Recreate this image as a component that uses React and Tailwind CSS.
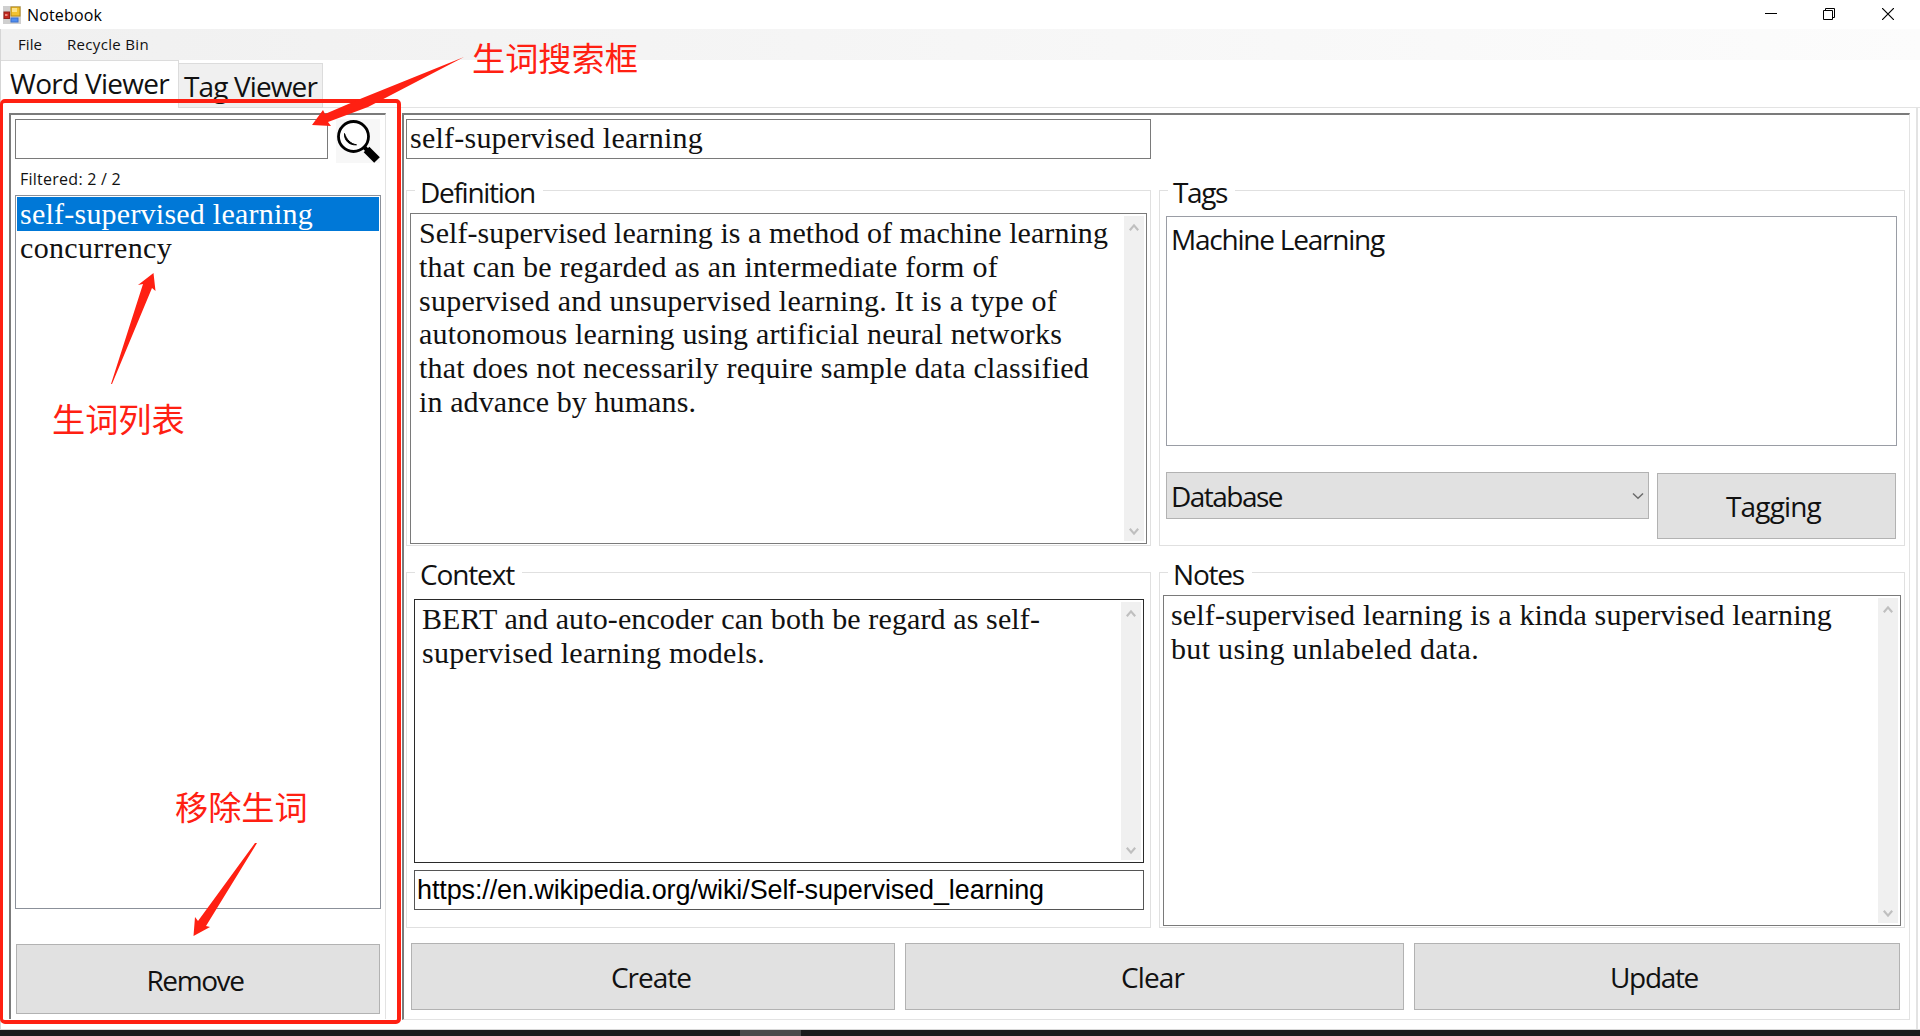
import { useLayoutEffect, useRef, useState } from "react";

// Text run that tracks its letters so the line spans exactly `w` pixels.
function Fit({ w, className = "", children }) {
  const ref = useRef(null);
  const [spacing, setSpacing] = useState(0);
  useLayoutEffect(() => {
    const natural = ref.current.getBoundingClientRect().width;
    setSpacing((w - natural) / children.length);
  }, []);
  return (
    <span className={"block w-max whitespace-pre " + className}>
      <span ref={ref} style={{ letterSpacing: spacing }}>{children}</span>
    </span>
  );
}

const SERIF = "font-['Liberation_Serif',serif] text-[30px] leading-[34px]";

function Lines({ items, className = "" }) {
  return (
    <div className={"flex-1 font-['Liberation_Serif',serif] text-[30px] leading-[33.75px] " + className}>
      {items.map(([text, w]) => (
        <Fit key={text} w={w}>{text}</Fit>
      ))}
    </div>
  );
}

function Scrollbar() {
  return (
    <div className="flex w-5 flex-col items-center justify-between bg-[#f0f0f0] pt-[7px] pb-[5px] text-[#bfbfbf]">
      <svg width="10" height="9" viewBox="0 0 10 9" fill="none" stroke="currentColor" strokeWidth="2.2">
        <path d="M0.8 7.2 5 2.4 9.2 7.2" />
      </svg>
      <svg width="10" height="9" viewBox="0 0 10 9" fill="none" stroke="currentColor" strokeWidth="2.2">
        <path d="M0.8 1.8 5 6.6 9.2 1.8" />
      </svg>
    </div>
  );
}

function Group({ title, titleWidth, className = "", children }) {
  return (
    <section className={"flex flex-col border border-[#e0e0e0] " + className}>
      <div className="-mt-[16px] ml-2 h-[33px] w-fit bg-white pr-2 pl-[5px] text-[28px] leading-[34px]">
        <Fit w={titleWidth}>{title}</Fit>
      </div>
      {children}
    </section>
  );
}

function Button({ w, className = "", children }) {
  return (
    <button className={"flex items-center justify-center border border-[#b2b2b2] bg-[#e1e1e1] text-[28px] leading-[34px] " + className}>
      <Fit w={w}>{children}</Fit>
    </button>
  );
}

function TitleBar() {
  return (
    <header className="flex h-[29px] items-center bg-white pl-[3px]">
      <svg width="18" height="18" viewBox="0 0 18 18">
        <rect width="18" height="18" fill="#cfcfcf" />
        <rect x="8" y="1" width="9" height="9" fill="#f2c230" stroke="#b88a12" />
        <rect x="9" y="2" width="5" height="4" fill="#fbe28a" />
        <rect x="1" y="6" width="5.5" height="6.5" fill="#c2281f" stroke="#94201a" />
        <rect x="2" y="8" width="2.5" height="2" fill="#ee8a80" />
        <rect x="8" y="12" width="7" height="4" fill="#4f8df0" stroke="#3a70cf" />
      </svg>
      <Fit w={75} className="ml-[6px] text-[16px] leading-5 text-black">Notebook</Fit>
      <div className="ml-auto flex items-center pb-px text-black">
        <svg width="12" height="12" viewBox="0 0 12 12" className="mr-[46px]"><path d="M0 5.5h12" stroke="currentColor" /></svg>
        <svg width="12" height="12" viewBox="0 0 12 12" className="mr-[47px]" fill="none" stroke="currentColor">
          <path d="M.5 2.5h9v9h-9zM2.5 2.5v-2h9v9h-2" />
        </svg>
        <svg width="12" height="12" viewBox="0 0 12 12" className="mr-[26px]" stroke="currentColor" strokeWidth="1.2">
          <path d="M0 0 12 12M12 0 0 12" />
        </svg>
      </div>
    </header>
  );
}

function WordList() {
  return (
    <aside className="flex h-[906px] w-[377px] flex-col border-t-2 border-r border-l-2 border-t-[#7b7b7b] border-r-[#e3e3e3] border-l-[#7b7b7b] pl-1">
      <div className="mt-1 flex">
        <div className="h-10 w-[313px] border border-[#7a7a7a]" />
        <svg width="44" height="44" viewBox="0 0 44 44" className="ml-2">
          <rect width="44" height="44" fill="#f7f7f7" />
          <circle cx="17.5" cy="17.5" r="15" fill="#fff" stroke="#000" strokeWidth="2.8" />
          <path d="M8.5 14.5C8 21 13 26.500 20.500 25.800C14.500 24.800 10.500 20.500 8.500 14.500z" fill="#000" stroke="#000" />
          <path d="M28 28 31 31" stroke="#000" strokeWidth="4" />
          <path d="M30.500 30.500 41 41" stroke="#000" strokeWidth="8" />
        </svg>
      </div>
      <Fit w={101} className="mt-1 ml-[5px] text-[16px] leading-6">Filtered: 2 / 2</Fit>
      <div className="mt-1 h-[714px] w-[366px] border border-[#8b9099] p-px">
        <div className={"h-[34px] bg-[#0078d7] pl-[3px] text-white " + SERIF}>
          <Fit w={293}>self-supervised learning</Fit>
        </div>
        <div className={"pl-[3px] " + SERIF}>
          <Fit w={152}>concurrency</Fit>
        </div>
      </div>
      <Button w={97} className="mt-[35px] ml-px h-[70px] w-[364px] pt-px pr-[6px]">Remove</Button>
    </aside>
  );
}

function Detail() {
  return (
    <main className="flex h-[907px] w-[1508px] flex-col border-t-2 border-r border-b border-l-2 border-t-[#7b7b7b] border-r-[#e3e3e3] border-b-[#e3e3e3] border-l-[#7b7b7b] pl-[2px]">
      <div className={"mt-1 h-10 w-[745px] border border-[#7a7a7a] pt-px pl-[3px] " + SERIF}>
        <Fit w={293}>self-supervised learning</Fit>
      </div>

      <div className="mt-[31px] flex gap-2">
        <Group title="Definition" titleWidth={115} className="h-[356px] w-[745px]">
          <div className="mt-[5px] ml-[3px] flex h-[331px] w-[737px] border border-[#7a7a7a] p-[2px]">
            <Lines
              className="pl-[6px]"
              items={[
                ["Self-supervised learning is a method of machine learning", 689],
                ["that can be regarded as an intermediate form of", 579],
                ["supervised and unsupervised learning. It is a type of", 638],
                ["autonomous learning using artificial neural networks", 643],
                ["that does not necessarily require sample data classified", 670],
                ["in advance by humans.", 277],
              ]}
            />
            <Scrollbar />
          </div>
        </Group>
        <Group title="Tags" titleWidth={54} className="h-[356px] w-[746px]">
          <div className="mt-2 ml-[6px] h-[230px] w-[731px] border border-[#9a9da5] pt-[5px] pl-1 text-[28px] leading-[34px]">
            <Fit w={213}>Machine Learning</Fit>
          </div>
          <div className="mt-[26px] ml-[6px] flex">
            <div className="flex h-[47px] w-[483px] items-center justify-between border border-[#b2b2b2] bg-[#e1e1e1] pr-[4px] pl-1 text-[28px] leading-[34px]">
              <Fit w={111} className="pt-px">Database</Fit>
              <svg width="12" height="8" viewBox="0 0 12 8" fill="none" stroke="#6b6b6b" strokeWidth="1.5"><path d="M1 1.500 6 6.300 11 1.500" /></svg>
            </div>
            <Button w={95} className="mt-px ml-2 h-[66px] w-[239px] pr-[6px]">Tagging</Button>
          </div>
        </Group>
      </div>

      <div className="mt-[26px] flex gap-2">
        <Group title="Context" titleWidth={94} className="h-[356px] w-[745px]">
          <div className="mt-[9px] ml-[7px] flex h-[264px] w-[730px] border border-[#2a2a2a] p-[2px]">
            <Lines
              className="pl-[5px]"
              items={[
                ["BERT and auto-encoder can both be regard as self-", 618],
                ["supervised learning models.", 343],
              ]}
            />
            <Scrollbar />
          </div>
          <div className="mt-[7px] ml-[7px] h-10 w-[730px] border border-[#555] pl-[2px] font-['Liberation_Sans',sans-serif] text-[27px] leading-[38px] text-black">
            <Fit w={627}>https://en.wikipedia.org/wiki/Self-supervised_learning</Fit>
          </div>
        </Group>
        <Group title="Notes" titleWidth={71} className="h-[356px] w-[746px]">
          <div className="mt-[5px] ml-[3px] flex h-[331px] w-[738px] border border-[#7a7a7a] p-[2px]">
            <Lines
              className="pl-[5px]"
              items={[
                ["self-supervised learning is a kinda supervised learning", 661],
                ["but using unlabeled data.", 308],
              ]}
            />
            <Scrollbar />
          </div>
        </Group>
      </div>

      <div className="mt-[15px] ml-[5px] flex">
        <Button w={80} className="h-[67px] w-[484px] pr-1">Create</Button>
        <Button w={63} className="ml-[10px] h-[67px] w-[499px] pr-1">Clear</Button>
        <Button w={88} className="ml-[10px] h-[67px] w-[486px] pr-[6px]">Update</Button>
      </div>
    </main>
  );
}

// Red callouts laid over the window.
function Callouts() {
  return (
    <div className="pointer-events-none absolute inset-0 font-['Noto_Sans_CJK_SC',sans-serif] text-[33.2px] leading-[34px] font-normal text-[#ff2012]">
      <div className="absolute top-[99px] left-0 h-[925px] w-[401px] rounded-[5px] border-4 border-l-[3px] border-[#ff2012]" />
      <svg className="absolute inset-0" width="1920" height="1036" viewBox="0 0 1920 1036" fill="#ff2012">
        <path d="M464 57 368 107 328 122 331 126 312 125 323 110 325 114 360 99z" />
        <path d="M111 384 143 284 138 285 153.500 273 155.500 291 152 288 112 384z" />
        <path d="M257 843 206 926 210 927 193.500 936 195 917 198 921 255 843z" />
      </svg>
      <span className="absolute top-[40px] left-[472px] whitespace-nowrap">生词搜索框</span>
      <span className="absolute top-[401px] left-[52px] whitespace-nowrap">生词列表</span>
      <span className="absolute top-[789px] left-[175px] whitespace-nowrap">移除生词</span>
    </div>
  );
}

export default function App() {
  return (
    <div className="relative flex h-[1036px] w-[1920px] flex-col overflow-hidden bg-white font-['Open_Sans',sans-serif] text-[#111]">
      <TitleBar />
      <nav className="flex h-[31px] items-center border-l border-[#d5d5d5] bg-linear-to-r from-[#f0f0f0] to-[#fcfcfc] pb-[2px] text-[15px] leading-5">
        <Fit w={24} className="ml-[17px]">File</Fit>
        <Fit w={82} className="ml-[25px]">Recycle Bin</Fit>
      </nav>
      <div className="flex h-12 border-l border-[#d5d5d5] text-[28px] leading-[34px]">
        <div className="h-12 w-[178px] border-t border-r border-[#dcdcdc] pt-[5px] pl-[9px]">
          <Fit w={159}>Word Viewer</Fit>
        </div>
        <div className="mt-[3px] h-[45px] w-36 border-t border-r border-b border-[#dcdcdc] bg-[#f0f0f0] pt-[5px] pl-[5px]">
          <Fit w={133}>Tag Viewer</Fit>
        </div>
        <div className="flex-1 border-b border-[#e3e3e3]" />
      </div>
      <div className="flex h-[921px] w-[1918px] gap-4 border-r-2 border-l border-r-[#e3e3e3] border-l-[#d5d5d5] pt-[5px] pl-2">
        <WordList />
        <Detail />
      </div>
      <div className="h-[1px] bg-[#d8d8d8]" />
      <footer className="h-[6px] bg-[#1c1c1c] pl-[740px]">
        <div className="h-full w-[61px] bg-[#4b4b4b]" />
      </footer>
      <Callouts />
    </div>
  );
}
